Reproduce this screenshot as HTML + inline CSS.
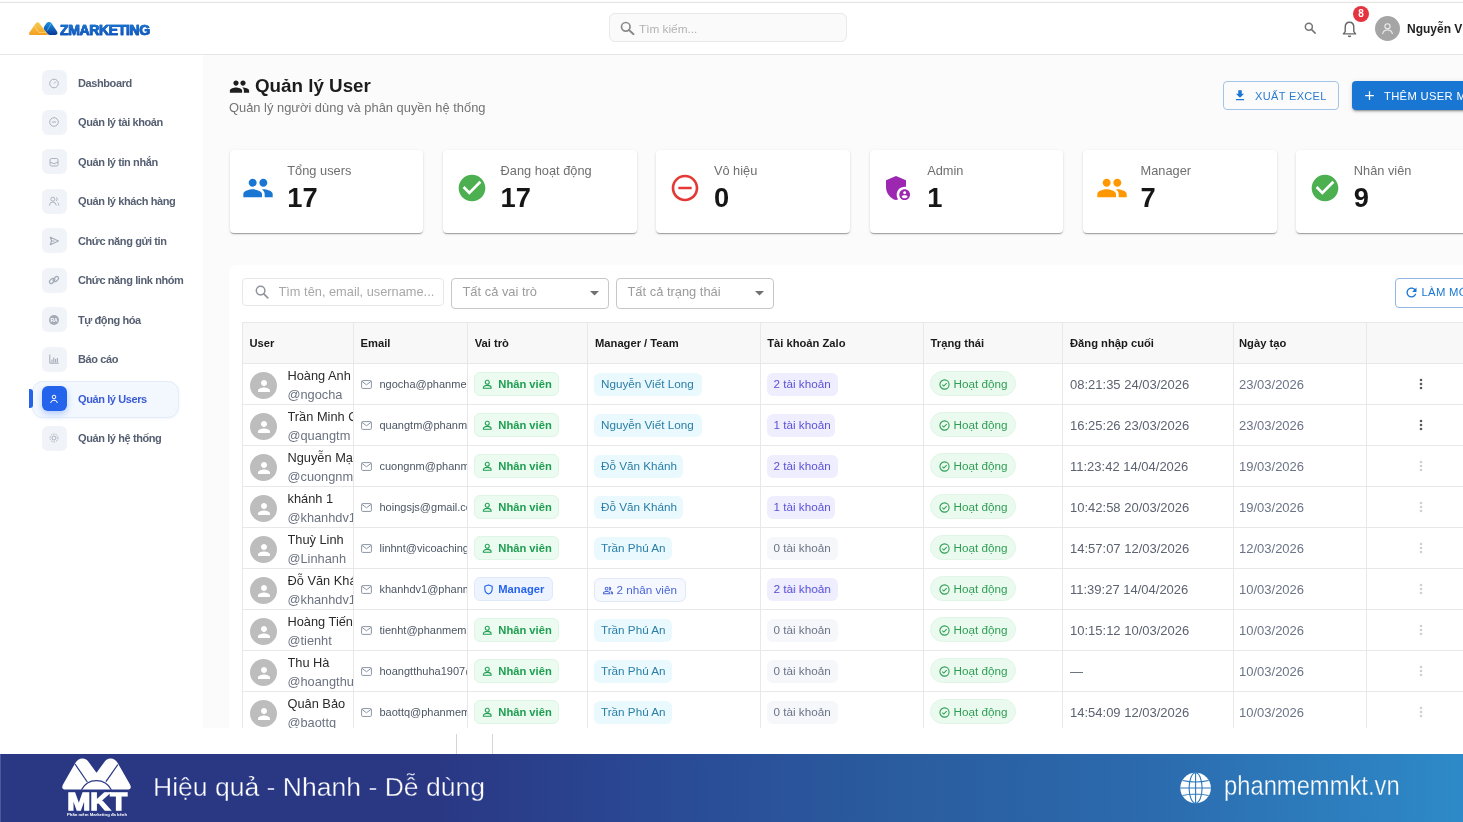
<!DOCTYPE html>
<html><head><meta charset="utf-8">
<style>

*{box-sizing:border-box;margin:0;padding:0}
html,body{width:1463px;height:822px;overflow:hidden;background:#fff;font-family:"Liberation Sans",sans-serif;color:#222}
.abs{position:absolute}
#topline{position:absolute;left:0;top:2px;width:1463px;height:1px;background:#e3e3e3;box-shadow:0 0 2px rgba(0,0,0,.08)}
#header{position:absolute;left:0;top:3px;width:1463px;height:52px;background:#fff;border-bottom:1px solid #e6e6e6;box-shadow:0 1px 2px rgba(0,0,0,.05)}
#sidebar{position:absolute;left:0;top:55px;width:203px;height:673px;background:#fff}
#main{position:absolute;left:203px;top:55px;width:1260px;height:673px;background:#fbfbfb}
#footer{position:absolute;left:0;top:754px;width:1463px;height:68px;background:linear-gradient(90deg,#5b6bab 0px,#2a3883 1.5px,#2a3884 30%,#2a4d98 48%,#2a5d9f 62%,#2b6aad 78%,#2e8ac8 100%)}
.nav{position:absolute;left:41.5px;width:170px;height:25px}
.nav .ic{position:absolute;left:0;top:0;width:25px;height:25px;border-radius:6px;background:#f0f3f8}
.nav .tx{position:absolute;left:36.5px;top:6.5px;font-size:11px;line-height:13px;letter-spacing:-0.4px;font-weight:700;color:#566072;white-space:nowrap}
.card{background:#fff;border-radius:4px;box-shadow:0 2px 1px -1px rgba(0,0,0,.2),0 1px 1px 0 rgba(0,0,0,.14),0 1px 3px 0 rgba(0,0,0,.12)}
#main{overflow:hidden}
.th{font-size:11.2px;line-height:14px;font-weight:700;color:#1a1a1a;white-space:nowrap}
.badge{border-radius:6px;white-space:nowrap}
.badge div{white-space:nowrap}
.hl{width:1300px;height:1px;background:#e8e8e8}.vl{width:1px;height:460px;background:#e8e8e8}
</style></head>
<body>
<div id="wrap" style="position:absolute;left:0;top:0;width:1463px;height:822px;overflow:hidden;filter:blur(0.35px)">
<div id="topline"></div>
<div id="header">
 <svg class="abs" style="left:26px;top:15px" width="36" height="20" viewBox="0 0 36 20">
  <defs><linearGradient id="lgo" x1="0" y1="0" x2="0" y2="1"><stop offset="0" stop-color="#f3cd55"/><stop offset="1" stop-color="#f59e1f"/></linearGradient>
  <linearGradient id="lgb" x1="0" y1="0" x2="0" y2="1"><stop offset="0" stop-color="#1b95dc"/><stop offset="1" stop-color="#08379a"/></linearGradient></defs>
  <path d="M9.6 5.4 Q11.6 2.9 13.6 5.4 L22.2 16.9 L4.6 16.9 Q2.2 16.9 3.4 14.4 Z" fill="url(#lgo)"/>
  <path d="M8.2 7.6 L12.8 14.4 L20.4 14.4" fill="none" stroke="#fcd77a" stroke-width="0.8"/>
  <path d="M18.2 11.6 Q17.2 10.2 18.2 8.6 L20.4 5.3 Q21.4 3.9 23 3.9 Q24.5 3.9 25.5 5.3 L31 13.6 Q32.4 16.9 29.4 16.9 L23.8 16.9 Q22.6 16.9 21.8 15.9 Z" fill="url(#lgb)"/>
  <path d="M25.2 5.2 L21.2 12.6" fill="none" stroke="#5cb8f2" stroke-width="0.8"/>
 </svg>
 <div class="abs" style="left:60px;top:18.5px;font-size:14px;line-height:17px;font-weight:700;letter-spacing:-0.35px;color:#1259c3;background:linear-gradient(180deg,#1f8ad8 0%,#1565c8 50%,#0b3f9f 100%);-webkit-background-clip:text;background-clip:text;-webkit-text-fill-color:transparent;-webkit-text-stroke:0.7px #145ec0">ZMARKETING</div>
 <div class="abs" style="left:609px;top:10px;width:238px;height:29px;background:#fafafa;border:1px solid #e9e9e9;border-radius:6px"></div>
 <svg class="abs" style="left:620px;top:18px" width="15" height="14" viewBox="0 0 15 14"><circle cx="5.8" cy="5.8" r="4.3" fill="none" stroke="#8a8a8a" stroke-width="1.7"/><path d="M9 9 L13.5 13.3" stroke="#8a8a8a" stroke-width="1.9" stroke-linecap="round"/></svg>
 <div class="abs" style="left:639px;top:19px;font-size:11.8px;color:#b3b3b3">Tìm kiếm...</div>
 <svg class="abs" style="left:1303.5px;top:19px" width="13" height="12" viewBox="0 0 14 13"><circle cx="5.2" cy="5.2" r="3.8" fill="none" stroke="#757575" stroke-width="1.6"/><path d="M8 8 L12 12" stroke="#757575" stroke-width="1.7" stroke-linecap="round"/></svg>
 <svg class="abs" style="left:1342px;top:18px" width="15" height="17" viewBox="0 0 15 17"><path d="M7.5 1.2 C4.6 1.2 3.2 3.6 3.2 6.4 L3.2 10.6 L1.4 12.9 L13.6 12.9 L11.8 10.6 L11.8 6.4 C11.8 3.6 10.4 1.2 7.5 1.2 Z" fill="none" stroke="#666" stroke-width="1.4" stroke-linejoin="round"/><path d="M6.2 14.8 Q7.5 16.2 8.8 14.8" fill="none" stroke="#666" stroke-width="1.3"/></svg>
 <div class="abs" style="left:1353px;top:3px;width:16px;height:16px;border-radius:50%;background:#e5343f;color:#fff;font-size:10px;font-weight:700;text-align:center;line-height:16px">8</div>
 <div class="abs" style="left:1375px;top:13px;width:25px;height:25px;border-radius:50%;background:#a5a5a5"></div>
 <svg class="abs" style="left:1381px;top:19px" width="13" height="13" viewBox="0 0 13 13"><circle cx="6.5" cy="4.3" r="2.6" fill="none" stroke="#eee" stroke-width="1.1"/><path d="M1.6 12 Q2.2 8 6.5 8 Q10.8 8 11.4 12" fill="none" stroke="#eee" stroke-width="1.1"/></svg>
 <div class="abs" style="left:1407px;top:19px;font-size:12px;font-weight:700;color:#222;white-space:nowrap">Nguyễn Viết Long</div>
</div>
<div id="sidebar">
<div class="abs" style="left:32px;top:325.5px;width:147px;height:37px;border-radius:11px;background:#f3f8ff;border:1px solid #e3ecf9;box-shadow:0 1px 3px rgba(37,99,235,.06)"></div>
<div class="abs" style="left:29px;top:334px;width:4px;height:19px;border-radius:0 3px 3px 0;background:#2563eb"></div>
<div class="nav" style="top:15.0px"><div class="ic"></div><svg class="abs" style="left:6.5px;top:6.5px" width="12" height="12" viewBox="0 0 12 12"><circle cx="6" cy="6.5" r="4.3" fill="none" stroke="#a3abb7" stroke-width="0.9"/><path d="M6 6.5 L7.8 4.6" stroke="#a3abb7" stroke-width="0.9"/></svg><div class="tx">Dashboard</div></div>
<div class="nav" style="top:54.5px"><div class="ic"></div><svg class="abs" style="left:6.5px;top:6.5px" width="12" height="12" viewBox="0 0 12 12"><circle cx="6" cy="6" r="4.3" fill="none" stroke="#a3abb7" stroke-width="0.9"/><path d="M4 6 h4" stroke="#a3abb7" stroke-width="0.9"/></svg><div class="tx">Quản lý tài khoản</div></div>
<div class="nav" style="top:94.0px"><div class="ic"></div><svg class="abs" style="left:6.5px;top:6.5px" width="12" height="12" viewBox="0 0 12 12"><rect x="2" y="2.5" width="8" height="7.5" rx="1.5" fill="none" stroke="#a3abb7" stroke-width="0.9"/><path d="M2 6 L6 7.8 L10 6" fill="none" stroke="#a3abb7" stroke-width="0.9"/></svg><div class="tx">Quản lý tin nhắn</div></div>
<div class="nav" style="top:133.5px"><div class="ic"></div><svg class="abs" style="left:6.5px;top:6.5px" width="12" height="12" viewBox="0 0 12 12"><circle cx="4.8" cy="4.2" r="2" fill="none" stroke="#a3abb7" stroke-width="0.9"/><path d="M1.3 10.5 Q1.8 7 4.8 7 Q7.8 7 8.3 10.5" fill="none" stroke="#a3abb7" stroke-width="0.9"/><path d="M8.5 2.5 Q10 4 8.5 6 M9.5 7.5 Q10.8 8.5 10.8 10.5" fill="none" stroke="#a3abb7" stroke-width="0.9"/></svg><div class="tx">Quản lý khách hàng</div></div>
<div class="nav" style="top:173.0px"><div class="ic"></div><svg class="abs" style="left:6.5px;top:6.5px" width="12" height="12" viewBox="0 0 12 12"><path d="M2.3 2.3 L10.5 6 L2.3 9.7 L3.6 6 Z M3.6 6 H6.5" fill="none" stroke="#a3abb7" stroke-width="1.1" stroke-linejoin="round"/></svg><div class="tx">Chức năng gửi tin</div></div>
<div class="nav" style="top:212.5px"><div class="ic"></div><svg class="abs" style="left:6.5px;top:6.5px" width="12" height="12" viewBox="0 0 12 12"><path d="M4.6 7.4 L7.4 4.6" stroke="#a3abb7" stroke-width="1.2" fill="none"/><rect x="1.2" y="5.2" width="5.6" height="3.6" rx="1.8" transform="rotate(-45 4 7)" fill="none" stroke="#a3abb7" stroke-width="1.2"/><rect x="5.2" y="3.2" width="5.6" height="3.6" rx="1.8" transform="rotate(-45 8 5)" fill="none" stroke="#a3abb7" stroke-width="1.2"/></svg><div class="tx">Chức năng link nhóm</div></div>
<div class="nav" style="top:252.0px"><div class="ic"></div><svg class="abs" style="left:6.5px;top:6.5px" width="12" height="12" viewBox="0 0 12 12"><circle cx="6" cy="6" r="5" fill="#a3abb7"/><text x="6" y="7.9" text-anchor="middle" font-family="Liberation Sans" font-weight="700" font-size="5" fill="#fff">RA</text></svg><div class="tx">Tự động hóa</div></div>
<div class="nav" style="top:291.5px"><div class="ic"></div><svg class="abs" style="left:6.5px;top:6.5px" width="12" height="12" viewBox="0 0 12 12"><path d="M1.8 1.5 V10.2 H10.8" fill="none" stroke="#a3abb7" stroke-width="1"/><path d="M4 9.5 V6.5 M5.8 9.5 V4.5 M7.6 9.5 V6 M9.4 9.5 V5" fill="none" stroke="#a3abb7" stroke-width="1.1"/></svg><div class="tx">Báo cáo</div></div>
<div class="nav" style="top:331.0px"><div class="ic" style="background:#2463eb;box-shadow:0 3px 6px rgba(37,99,235,.3)"></div><svg class="abs" style="left:6.5px;top:6.5px" width="12" height="12" viewBox="0 0 12 12"><circle cx="6" cy="4" r="1.8" fill="none" stroke="#fff" stroke-width="1"/><path d="M2.6 10 Q3 7.2 6 7.2 Q9 7.2 9.4 10" fill="none" stroke="#fff" stroke-width="1"/></svg><div class="tx" style="color:#3b5bd6">Quản lý Users</div></div>
<div class="nav" style="top:370.5px"><div class="ic"></div><svg class="abs" style="left:6.5px;top:6.5px" width="12" height="12" viewBox="0 0 12 12"><circle cx="6" cy="6" r="2" fill="none" stroke="#a3abb7" stroke-width="0.9"/><circle cx="6" cy="6" r="4" fill="none" stroke="#a3abb7" stroke-width="0.9" stroke-dasharray="1.5 1"/></svg><div class="tx">Quản lý hệ thống</div></div>
</div>
<div id="main">
<div id="tablecard" class="abs" style="left:26px;top:210px;width:1300px;height:600px;background:#fff;border-radius:8px"></div>
<div class="abs" style="left:39px;top:222.5px;width:201.5px;height:28px;border:1px solid #e5e7eb;border-radius:4px;background:#fff"></div>
<svg class="abs" style="left:52px;top:229.5px" width="14" height="14" viewBox="0 0 14 14"><circle cx="5.6" cy="5.6" r="4.3" fill="none" stroke="#8f949c" stroke-width="1.5"/><path d="M8.8 8.8 L12.8 12.8" stroke="#8f949c" stroke-width="1.7" stroke-linecap="round"/></svg>
<div class="abs" style="left:75.5px;top:229px;width:159px;overflow:hidden;font-size:12.8px;line-height:15px;color:#a8a8a8;white-space:nowrap">Tìm tên, email, username...</div>
<div class="abs" style="left:248px;top:222.8px;width:157.5px;height:31px;border:1px solid #c7c7c7;border-radius:4px;background:#fff"><div class="abs" style="left:10.5px;top:5.5px;font-size:12.9px;line-height:15px;color:#9b9b9b;white-space:nowrap">Tất cả vai trò</div><svg class="abs" style="left:137.5px;top:12px" width="9" height="5" viewBox="0 0 9 5"><path d="M0 0 L9 0 L4.5 4.6 Z" fill="#707070"/></svg></div>
<div class="abs" style="left:413px;top:222.8px;width:158px;height:31px;border:1px solid #c7c7c7;border-radius:4px;background:#fff"><div class="abs" style="left:10.5px;top:5.5px;font-size:12.9px;line-height:15px;color:#9b9b9b;white-space:nowrap">Tất cả trạng thái</div><svg class="abs" style="left:138px;top:12px" width="9" height="5" viewBox="0 0 9 5"><path d="M0 0 L9 0 L4.5 4.6 Z" fill="#707070"/></svg></div>
<div class="abs" style="left:1191.5px;top:222.5px;width:110px;height:30px;border:1px solid #93b7e3;border-radius:4px;background:#fff"></div>
<svg class="abs" style="left:1201px;top:230px" width="15" height="15" viewBox="0 0 24 24"><path d="M17.65 6.35C16.2 4.9 14.21 4 12 4c-4.42 0-7.99 3.58-7.99 8s3.57 8 7.99 8c3.730 0 6.84-2.55 7.73-6h-2.08c-.82 2.33-3.04 4-5.65 4-3.31 0-6-2.69-6-6s2.69-6 6-6c1.66 0 3.14.69 4.22 1.78L13 11h7V4z" fill="#1976d2"/></svg>
<div class="abs" style="left:1218.5px;top:231px;font-size:11.3px;line-height:13px;color:#1976d2;letter-spacing:0.3px;white-space:nowrap">LÀM MỚI</div>
<div class="abs" style="left:39px;top:267px;width:1300px;height:41px;background:#f8f8f8"></div>
<div class="abs hl" style="left:39px;top:267px"></div>
<div class="abs hl" style="left:39px;top:308px"></div>
<div class="abs hl" style="left:39px;top:349px"></div>
<div class="abs hl" style="left:39px;top:390px"></div>
<div class="abs hl" style="left:39px;top:431px"></div>
<div class="abs hl" style="left:39px;top:472px"></div>
<div class="abs hl" style="left:39px;top:513px"></div>
<div class="abs hl" style="left:39px;top:554px"></div>
<div class="abs hl" style="left:39px;top:595px"></div>
<div class="abs hl" style="left:39px;top:636px"></div>
<div class="abs hl" style="left:39px;top:677px"></div>
<div class="abs vl" style="left:39px;top:267px"></div>
<div class="abs vl" style="left:150px;top:267px"></div>
<div class="abs vl" style="left:264px;top:267px"></div>
<div class="abs vl" style="left:384px;top:267px"></div>
<div class="abs vl" style="left:557px;top:267px"></div>
<div class="abs vl" style="left:720px;top:267px"></div>
<div class="abs vl" style="left:859px;top:267px"></div>
<div class="abs vl" style="left:1030px;top:267px"></div>
<div class="abs vl" style="left:1163px;top:267px"></div>
<div class="abs th" style="left:46.5px;top:281px">User</div>
<div class="abs th" style="left:157.5px;top:281px">Email</div>
<div class="abs th" style="left:271.7px;top:281px">Vai trò</div>
<div class="abs th" style="left:392px;top:281px">Manager / Team</div>
<div class="abs th" style="left:564.2px;top:281px">Tài khoản Zalo</div>
<div class="abs th" style="left:727.6px;top:281px">Trạng thái</div>
<div class="abs th" style="left:867px;top:281px">Đăng nhập cuối</div>
<div class="abs th" style="left:1036px;top:281px">Ngày tạo</div>
<div class="abs" style="left:47px;top:317px;width:27px;height:27px;border-radius:50%;background:#bdbdbd"></div>
<svg class="abs" style="left:51.5px;top:321.5px" width="18" height="18" viewBox="0 0 24 24"><path d="M12 12c2.21 0 4-1.79 4-4s-1.79-4-4-4-4 1.79-4 4 1.79 4 4 4m0 2c-2.67 0-8 1.34-8 4v2h16v-2c0-2.66-5.33-4-8-4" fill="#fff"/></svg>
<div class="abs" style="left:84.5px;top:312.8px;width:65.5px;overflow:hidden;font-size:12.8px;line-height:15px;color:#2b2b2b;white-space:nowrap">Hoàng Anh</div>
<div class="abs" style="left:84.5px;top:331.8px;width:65.5px;overflow:hidden;font-size:12.8px;line-height:15px;color:#6b7280;white-space:nowrap">@ngocha</div>
<svg class="abs" style="left:158px;top:325px" width="11" height="9" viewBox="0 0 11 9"><rect x="0.6" y="0.6" width="9.8" height="7.8" rx="1" fill="none" stroke="#8b95a5" stroke-width="1"/><path d="M0.8 1.2 L5.5 4.8 L10.2 1.2" fill="none" stroke="#8b95a5" stroke-width="1"/></svg>
<div class="abs" style="left:176.5px;top:321.5px;width:87.5px;overflow:hidden;font-size:11px;line-height:14px;color:#4b5563;white-space:nowrap">ngocha@phanmem.vn</div>
<div class="abs badge" style="left:271.3px;top:316.5px;width:85px;height:24.5px;background:#ebfbf0;border:1px solid #dff5e6;color:#1e9e50"><svg class="abs" style="left:7px;top:6px;color:#1e9e50" width="10.5" height="10.5" viewBox="0 0 12 12"><circle cx="6" cy="3.8" r="2.3" fill="none" stroke="currentColor" stroke-width="1.2"/><path d="M1.5 10.5 Q1.5 7.3 6 7.3 Q10.5 7.3 10.5 10.5 Z" fill="none" stroke="currentColor" stroke-width="1.2" stroke-linejoin="round"/></svg><div class="abs" style="left:23px;top:5.5px;font-size:11.2px;line-height:13px;font-weight:700">Nhân viên</div></div>
<div class="abs badge" style="left:391px;top:317.5px;width:107.5px;height:23px;background:#e9f9fd;color:#2b7ea6"><div class="abs" style="left:7px;top:4.5px;font-size:11.7px;line-height:14px">Nguyễn Viết Long</div></div>
<div class="abs badge" style="left:564px;top:317.5px;width:70.5px;height:23px;background:#efeefe;color:#5b52d6"><div class="abs" style="left:6.5px;top:4.5px;font-size:11.7px;line-height:14px">2 tài khoản</div></div>
<div class="abs" style="left:727px;top:316px;width:85.5px;height:25px;border-radius:13px;background:#ebfaef;border:1px solid #e0f5e6;color:#2f9e55"><svg class="abs" style="left:7.5px;top:6.5px" width="11" height="11" viewBox="0 0 12 12"><circle cx="6" cy="6" r="5" fill="none" stroke="#2f9e55" stroke-width="1.2"/><path d="M3.6 6.1 L5.3 7.7 L8.4 4.6" fill="none" stroke="#2f9e55" stroke-width="1.2"/></svg><div class="abs" style="left:22.5px;top:5px;font-size:11.7px;line-height:14px">Hoạt động</div></div>
<div class="abs" style="left:867px;top:321.5px;font-size:13px;line-height:15px;color:#5c6370;white-space:nowrap">08:21:35 24/03/2026</div>
<div class="abs" style="left:1036px;top:322px;font-size:13px;line-height:15px;color:#6b7487;white-space:nowrap">23/03/2026</div>
<svg class="abs" style="left:1216.1px;top:323px" width="4" height="13" viewBox="0 0 4 13"><circle cx="2" cy="2" r="1.3" fill="#5a5a5a"/><circle cx="2" cy="6" r="1.3" fill="#5a5a5a"/><circle cx="2" cy="10" r="1.3" fill="#5a5a5a"/></svg>
<div class="abs" style="left:47px;top:358px;width:27px;height:27px;border-radius:50%;background:#bdbdbd"></div>
<svg class="abs" style="left:51.5px;top:362.5px" width="18" height="18" viewBox="0 0 24 24"><path d="M12 12c2.21 0 4-1.79 4-4s-1.79-4-4-4-4 1.79-4 4 1.79 4 4 4m0 2c-2.67 0-8 1.34-8 4v2h16v-2c0-2.66-5.33-4-8-4" fill="#fff"/></svg>
<div class="abs" style="left:84.5px;top:353.8px;width:65.5px;overflow:hidden;font-size:12.8px;line-height:15px;color:#2b2b2b;white-space:nowrap">Trần Minh Quang</div>
<div class="abs" style="left:84.5px;top:372.8px;width:65.5px;overflow:hidden;font-size:12.8px;line-height:15px;color:#6b7280;white-space:nowrap">@quangtm</div>
<svg class="abs" style="left:158px;top:366px" width="11" height="9" viewBox="0 0 11 9"><rect x="0.6" y="0.6" width="9.8" height="7.8" rx="1" fill="none" stroke="#8b95a5" stroke-width="1"/><path d="M0.8 1.2 L5.5 4.8 L10.2 1.2" fill="none" stroke="#8b95a5" stroke-width="1"/></svg>
<div class="abs" style="left:176.5px;top:362.5px;width:87.5px;overflow:hidden;font-size:11px;line-height:14px;color:#4b5563;white-space:nowrap">quangtm@phanmem.vn</div>
<div class="abs badge" style="left:271.3px;top:357.5px;width:85px;height:24.5px;background:#ebfbf0;border:1px solid #dff5e6;color:#1e9e50"><svg class="abs" style="left:7px;top:6px;color:#1e9e50" width="10.5" height="10.5" viewBox="0 0 12 12"><circle cx="6" cy="3.8" r="2.3" fill="none" stroke="currentColor" stroke-width="1.2"/><path d="M1.5 10.5 Q1.5 7.3 6 7.3 Q10.5 7.3 10.5 10.5 Z" fill="none" stroke="currentColor" stroke-width="1.2" stroke-linejoin="round"/></svg><div class="abs" style="left:23px;top:5.5px;font-size:11.2px;line-height:13px;font-weight:700">Nhân viên</div></div>
<div class="abs badge" style="left:391px;top:358.5px;width:107.5px;height:23px;background:#e9f9fd;color:#2b7ea6"><div class="abs" style="left:7px;top:4.5px;font-size:11.7px;line-height:14px">Nguyễn Viết Long</div></div>
<div class="abs badge" style="left:564px;top:358.5px;width:68px;height:23px;background:#efeefe;color:#5b52d6"><div class="abs" style="left:6.5px;top:4.5px;font-size:11.7px;line-height:14px">1 tài khoản</div></div>
<div class="abs" style="left:727px;top:357px;width:85.5px;height:25px;border-radius:13px;background:#ebfaef;border:1px solid #e0f5e6;color:#2f9e55"><svg class="abs" style="left:7.5px;top:6.5px" width="11" height="11" viewBox="0 0 12 12"><circle cx="6" cy="6" r="5" fill="none" stroke="#2f9e55" stroke-width="1.2"/><path d="M3.6 6.1 L5.3 7.7 L8.4 4.6" fill="none" stroke="#2f9e55" stroke-width="1.2"/></svg><div class="abs" style="left:22.5px;top:5px;font-size:11.7px;line-height:14px">Hoạt động</div></div>
<div class="abs" style="left:867px;top:362.5px;font-size:13px;line-height:15px;color:#5c6370;white-space:nowrap">16:25:26 23/03/2026</div>
<div class="abs" style="left:1036px;top:363px;font-size:13px;line-height:15px;color:#6b7487;white-space:nowrap">23/03/2026</div>
<svg class="abs" style="left:1216.1px;top:364px" width="4" height="13" viewBox="0 0 4 13"><circle cx="2" cy="2" r="1.3" fill="#5a5a5a"/><circle cx="2" cy="6" r="1.3" fill="#5a5a5a"/><circle cx="2" cy="10" r="1.3" fill="#5a5a5a"/></svg>
<div class="abs" style="left:47px;top:399px;width:27px;height:27px;border-radius:50%;background:#bdbdbd"></div>
<svg class="abs" style="left:51.5px;top:403.5px" width="18" height="18" viewBox="0 0 24 24"><path d="M12 12c2.21 0 4-1.79 4-4s-1.79-4-4-4-4 1.79-4 4 1.79 4 4 4m0 2c-2.67 0-8 1.34-8 4v2h16v-2c0-2.66-5.33-4-8-4" fill="#fff"/></svg>
<div class="abs" style="left:84.5px;top:394.8px;width:65.5px;overflow:hidden;font-size:12.8px;line-height:15px;color:#2b2b2b;white-space:nowrap">Nguyễn Mạnh Cường</div>
<div class="abs" style="left:84.5px;top:413.8px;width:65.5px;overflow:hidden;font-size:12.8px;line-height:15px;color:#6b7280;white-space:nowrap">@cuongnm</div>
<svg class="abs" style="left:158px;top:407px" width="11" height="9" viewBox="0 0 11 9"><rect x="0.6" y="0.6" width="9.8" height="7.8" rx="1" fill="none" stroke="#8b95a5" stroke-width="1"/><path d="M0.8 1.2 L5.5 4.8 L10.2 1.2" fill="none" stroke="#8b95a5" stroke-width="1"/></svg>
<div class="abs" style="left:176.5px;top:403.5px;width:87.5px;overflow:hidden;font-size:11px;line-height:14px;color:#4b5563;white-space:nowrap">cuongnm@phanmem.vn</div>
<div class="abs badge" style="left:271.3px;top:398.5px;width:85px;height:24.5px;background:#ebfbf0;border:1px solid #dff5e6;color:#1e9e50"><svg class="abs" style="left:7px;top:6px;color:#1e9e50" width="10.5" height="10.5" viewBox="0 0 12 12"><circle cx="6" cy="3.8" r="2.3" fill="none" stroke="currentColor" stroke-width="1.2"/><path d="M1.5 10.5 Q1.5 7.3 6 7.3 Q10.5 7.3 10.5 10.5 Z" fill="none" stroke="currentColor" stroke-width="1.2" stroke-linejoin="round"/></svg><div class="abs" style="left:23px;top:5.5px;font-size:11.2px;line-height:13px;font-weight:700">Nhân viên</div></div>
<div class="abs badge" style="left:391px;top:399.5px;width:89px;height:23px;background:#e9f9fd;color:#2b7ea6"><div class="abs" style="left:7px;top:4.5px;font-size:11.7px;line-height:14px">Đỗ Văn Khánh</div></div>
<div class="abs badge" style="left:564px;top:399.5px;width:70.5px;height:23px;background:#efeefe;color:#5b52d6"><div class="abs" style="left:6.5px;top:4.5px;font-size:11.7px;line-height:14px">2 tài khoản</div></div>
<div class="abs" style="left:727px;top:398px;width:85.5px;height:25px;border-radius:13px;background:#ebfaef;border:1px solid #e0f5e6;color:#2f9e55"><svg class="abs" style="left:7.5px;top:6.5px" width="11" height="11" viewBox="0 0 12 12"><circle cx="6" cy="6" r="5" fill="none" stroke="#2f9e55" stroke-width="1.2"/><path d="M3.6 6.1 L5.3 7.7 L8.4 4.6" fill="none" stroke="#2f9e55" stroke-width="1.2"/></svg><div class="abs" style="left:22.5px;top:5px;font-size:11.7px;line-height:14px">Hoạt động</div></div>
<div class="abs" style="left:867px;top:403.5px;font-size:13px;line-height:15px;color:#5c6370;white-space:nowrap">11:23:42 14/04/2026</div>
<div class="abs" style="left:1036px;top:404px;font-size:13px;line-height:15px;color:#6b7487;white-space:nowrap">19/03/2026</div>
<svg class="abs" style="left:1216.1px;top:405px" width="4" height="13" viewBox="0 0 4 13"><circle cx="2" cy="2" r="1.3" fill="#d0d0d0"/><circle cx="2" cy="6" r="1.3" fill="#d0d0d0"/><circle cx="2" cy="10" r="1.3" fill="#d0d0d0"/></svg>
<div class="abs" style="left:47px;top:440px;width:27px;height:27px;border-radius:50%;background:#bdbdbd"></div>
<svg class="abs" style="left:51.5px;top:444.5px" width="18" height="18" viewBox="0 0 24 24"><path d="M12 12c2.21 0 4-1.79 4-4s-1.79-4-4-4-4 1.79-4 4 1.79 4 4 4m0 2c-2.67 0-8 1.34-8 4v2h16v-2c0-2.66-5.33-4-8-4" fill="#fff"/></svg>
<div class="abs" style="left:84.5px;top:435.8px;width:65.5px;overflow:hidden;font-size:12.8px;line-height:15px;color:#2b2b2b;white-space:nowrap">khánh 1</div>
<div class="abs" style="left:84.5px;top:454.8px;width:65.5px;overflow:hidden;font-size:12.8px;line-height:15px;color:#6b7280;white-space:nowrap">@khanhdv1</div>
<svg class="abs" style="left:158px;top:448px" width="11" height="9" viewBox="0 0 11 9"><rect x="0.6" y="0.6" width="9.8" height="7.8" rx="1" fill="none" stroke="#8b95a5" stroke-width="1"/><path d="M0.8 1.2 L5.5 4.8 L10.2 1.2" fill="none" stroke="#8b95a5" stroke-width="1"/></svg>
<div class="abs" style="left:176.5px;top:444.5px;width:87.5px;overflow:hidden;font-size:11px;line-height:14px;color:#4b5563;white-space:nowrap">hoingsjs@gmail.com</div>
<div class="abs badge" style="left:271.3px;top:439.5px;width:85px;height:24.5px;background:#ebfbf0;border:1px solid #dff5e6;color:#1e9e50"><svg class="abs" style="left:7px;top:6px;color:#1e9e50" width="10.5" height="10.5" viewBox="0 0 12 12"><circle cx="6" cy="3.8" r="2.3" fill="none" stroke="currentColor" stroke-width="1.2"/><path d="M1.5 10.5 Q1.5 7.3 6 7.3 Q10.5 7.3 10.5 10.5 Z" fill="none" stroke="currentColor" stroke-width="1.2" stroke-linejoin="round"/></svg><div class="abs" style="left:23px;top:5.5px;font-size:11.2px;line-height:13px;font-weight:700">Nhân viên</div></div>
<div class="abs badge" style="left:391px;top:440.5px;width:89px;height:23px;background:#e9f9fd;color:#2b7ea6"><div class="abs" style="left:7px;top:4.5px;font-size:11.7px;line-height:14px">Đỗ Văn Khánh</div></div>
<div class="abs badge" style="left:564px;top:440.5px;width:68px;height:23px;background:#efeefe;color:#5b52d6"><div class="abs" style="left:6.5px;top:4.5px;font-size:11.7px;line-height:14px">1 tài khoản</div></div>
<div class="abs" style="left:727px;top:439px;width:85.5px;height:25px;border-radius:13px;background:#ebfaef;border:1px solid #e0f5e6;color:#2f9e55"><svg class="abs" style="left:7.5px;top:6.5px" width="11" height="11" viewBox="0 0 12 12"><circle cx="6" cy="6" r="5" fill="none" stroke="#2f9e55" stroke-width="1.2"/><path d="M3.6 6.1 L5.3 7.7 L8.4 4.6" fill="none" stroke="#2f9e55" stroke-width="1.2"/></svg><div class="abs" style="left:22.5px;top:5px;font-size:11.7px;line-height:14px">Hoạt động</div></div>
<div class="abs" style="left:867px;top:444.5px;font-size:13px;line-height:15px;color:#5c6370;white-space:nowrap">10:42:58 20/03/2026</div>
<div class="abs" style="left:1036px;top:445px;font-size:13px;line-height:15px;color:#6b7487;white-space:nowrap">19/03/2026</div>
<svg class="abs" style="left:1216.1px;top:446px" width="4" height="13" viewBox="0 0 4 13"><circle cx="2" cy="2" r="1.3" fill="#d0d0d0"/><circle cx="2" cy="6" r="1.3" fill="#d0d0d0"/><circle cx="2" cy="10" r="1.3" fill="#d0d0d0"/></svg>
<div class="abs" style="left:47px;top:481px;width:27px;height:27px;border-radius:50%;background:#bdbdbd"></div>
<svg class="abs" style="left:51.5px;top:485.5px" width="18" height="18" viewBox="0 0 24 24"><path d="M12 12c2.21 0 4-1.79 4-4s-1.79-4-4-4-4 1.79-4 4 1.79 4 4 4m0 2c-2.67 0-8 1.34-8 4v2h16v-2c0-2.66-5.33-4-8-4" fill="#fff"/></svg>
<div class="abs" style="left:84.5px;top:476.8px;width:65.5px;overflow:hidden;font-size:12.8px;line-height:15px;color:#2b2b2b;white-space:nowrap">Thuỳ Linh</div>
<div class="abs" style="left:84.5px;top:495.8px;width:65.5px;overflow:hidden;font-size:12.8px;line-height:15px;color:#6b7280;white-space:nowrap">@Linhanh</div>
<svg class="abs" style="left:158px;top:489px" width="11" height="9" viewBox="0 0 11 9"><rect x="0.6" y="0.6" width="9.8" height="7.8" rx="1" fill="none" stroke="#8b95a5" stroke-width="1"/><path d="M0.8 1.2 L5.5 4.8 L10.2 1.2" fill="none" stroke="#8b95a5" stroke-width="1"/></svg>
<div class="abs" style="left:176.5px;top:485.5px;width:87.5px;overflow:hidden;font-size:11px;line-height:14px;color:#4b5563;white-space:nowrap">linhnt@vicoaching.vn</div>
<div class="abs badge" style="left:271.3px;top:480.5px;width:85px;height:24.5px;background:#ebfbf0;border:1px solid #dff5e6;color:#1e9e50"><svg class="abs" style="left:7px;top:6px;color:#1e9e50" width="10.5" height="10.5" viewBox="0 0 12 12"><circle cx="6" cy="3.8" r="2.3" fill="none" stroke="currentColor" stroke-width="1.2"/><path d="M1.5 10.5 Q1.5 7.3 6 7.3 Q10.5 7.3 10.5 10.5 Z" fill="none" stroke="currentColor" stroke-width="1.2" stroke-linejoin="round"/></svg><div class="abs" style="left:23px;top:5.5px;font-size:11.2px;line-height:13px;font-weight:700">Nhân viên</div></div>
<div class="abs badge" style="left:391px;top:481.5px;width:77.5px;height:23px;background:#e9f9fd;color:#2b7ea6"><div class="abs" style="left:7px;top:4.5px;font-size:11.7px;line-height:14px">Trần Phú An</div></div>
<div class="abs badge" style="left:564px;top:481.5px;width:70.5px;height:23px;background:#f5f7fa;color:#6b7587"><div class="abs" style="left:6.5px;top:4.5px;font-size:11.7px;line-height:14px">0 tài khoản</div></div>
<div class="abs" style="left:727px;top:480px;width:85.5px;height:25px;border-radius:13px;background:#ebfaef;border:1px solid #e0f5e6;color:#2f9e55"><svg class="abs" style="left:7.5px;top:6.5px" width="11" height="11" viewBox="0 0 12 12"><circle cx="6" cy="6" r="5" fill="none" stroke="#2f9e55" stroke-width="1.2"/><path d="M3.6 6.1 L5.3 7.7 L8.4 4.6" fill="none" stroke="#2f9e55" stroke-width="1.2"/></svg><div class="abs" style="left:22.5px;top:5px;font-size:11.7px;line-height:14px">Hoạt động</div></div>
<div class="abs" style="left:867px;top:485.5px;font-size:13px;line-height:15px;color:#5c6370;white-space:nowrap">14:57:07 12/03/2026</div>
<div class="abs" style="left:1036px;top:486px;font-size:13px;line-height:15px;color:#6b7487;white-space:nowrap">12/03/2026</div>
<svg class="abs" style="left:1216.1px;top:487px" width="4" height="13" viewBox="0 0 4 13"><circle cx="2" cy="2" r="1.3" fill="#d0d0d0"/><circle cx="2" cy="6" r="1.3" fill="#d0d0d0"/><circle cx="2" cy="10" r="1.3" fill="#d0d0d0"/></svg>
<div class="abs" style="left:47px;top:522px;width:27px;height:27px;border-radius:50%;background:#bdbdbd"></div>
<svg class="abs" style="left:51.5px;top:526.5px" width="18" height="18" viewBox="0 0 24 24"><path d="M12 12c2.21 0 4-1.79 4-4s-1.79-4-4-4-4 1.79-4 4 1.79 4 4 4m0 2c-2.67 0-8 1.34-8 4v2h16v-2c0-2.66-5.33-4-8-4" fill="#fff"/></svg>
<div class="abs" style="left:84.5px;top:517.8px;width:65.5px;overflow:hidden;font-size:12.8px;line-height:15px;color:#2b2b2b;white-space:nowrap">Đỗ Văn Khánh</div>
<div class="abs" style="left:84.5px;top:536.8px;width:65.5px;overflow:hidden;font-size:12.8px;line-height:15px;color:#6b7280;white-space:nowrap">@khanhdv1</div>
<svg class="abs" style="left:158px;top:530px" width="11" height="9" viewBox="0 0 11 9"><rect x="0.6" y="0.6" width="9.8" height="7.8" rx="1" fill="none" stroke="#8b95a5" stroke-width="1"/><path d="M0.8 1.2 L5.5 4.8 L10.2 1.2" fill="none" stroke="#8b95a5" stroke-width="1"/></svg>
<div class="abs" style="left:176.5px;top:526.5px;width:87.5px;overflow:hidden;font-size:11px;line-height:14px;color:#4b5563;white-space:nowrap">khanhdv1@phanmem.vn</div>
<div class="abs badge" style="left:271.3px;top:521.5px;width:78.5px;height:24px;background:#eef4ff;border:1px solid #dfe9fb;color:#2563eb"><svg class="abs" style="left:7.5px;top:6.5px" width="11" height="11" viewBox="0 0 24 24"><path d="M12 2 L4 5 V11 C4 16 7.5 20.5 12 22 C16.5 20.5 20 16 20 11 V5 Z" fill="none" stroke="#2563eb" stroke-width="2.4" stroke-linejoin="round"/></svg><div class="abs" style="left:23px;top:5.5px;font-size:11.2px;line-height:13px;font-weight:700">Manager</div></div>
<div class="abs badge" style="left:391px;top:522.5px;width:91.5px;height:24px;background:#f5f8ff;border:1px solid #e2e9f6;color:#4a66d6"><svg class="abs" style="left:6.5px;top:6px" width="12" height="11" viewBox="0 0 24 24"><path d="M16.67 13.13C18.04 14.06 19 15.32 19 17v3h4v-3c0-2.18-3.57-3.47-6.33-3.87M15 12c2.21 0 4-1.79 4-4s-1.79-4-4-4c-.47 0-.91.1-1.33.24C14.5 5.27 15 6.58 15 8s-.5 2.73-1.33 3.76c.42.14.86.24 1.33.24m-6 0c2.21 0 4-1.79 4-4s-1.79-4-4-4-4 1.79-4 4 1.79 4 4 4m0-6c1.1 0 2 .9 2 2s-.9 2-2 2-2-.9-2-2 .9-2 2-2m0 7c-2.67 0-8 1.34-8 4v3h16v-3c0-2.66-5.33-4-8-4m6 5H3v-.99C3.2 16.29 6.3 15 9 15s5.8 1.29 6 2z" fill="#4a66d6"/></svg><div class="abs" style="left:21.5px;top:4.5px;font-size:11.7px;line-height:14px">2 nhân viên</div></div>
<div class="abs badge" style="left:564px;top:522.5px;width:70.5px;height:23px;background:#efeefe;color:#5b52d6"><div class="abs" style="left:6.5px;top:4.5px;font-size:11.7px;line-height:14px">2 tài khoản</div></div>
<div class="abs" style="left:727px;top:521px;width:85.5px;height:25px;border-radius:13px;background:#ebfaef;border:1px solid #e0f5e6;color:#2f9e55"><svg class="abs" style="left:7.5px;top:6.5px" width="11" height="11" viewBox="0 0 12 12"><circle cx="6" cy="6" r="5" fill="none" stroke="#2f9e55" stroke-width="1.2"/><path d="M3.6 6.1 L5.3 7.7 L8.4 4.6" fill="none" stroke="#2f9e55" stroke-width="1.2"/></svg><div class="abs" style="left:22.5px;top:5px;font-size:11.7px;line-height:14px">Hoạt động</div></div>
<div class="abs" style="left:867px;top:526.5px;font-size:13px;line-height:15px;color:#5c6370;white-space:nowrap">11:39:27 14/04/2026</div>
<div class="abs" style="left:1036px;top:527px;font-size:13px;line-height:15px;color:#6b7487;white-space:nowrap">10/03/2026</div>
<svg class="abs" style="left:1216.1px;top:528px" width="4" height="13" viewBox="0 0 4 13"><circle cx="2" cy="2" r="1.3" fill="#d0d0d0"/><circle cx="2" cy="6" r="1.3" fill="#d0d0d0"/><circle cx="2" cy="10" r="1.3" fill="#d0d0d0"/></svg>
<div class="abs" style="left:47px;top:563px;width:27px;height:27px;border-radius:50%;background:#bdbdbd"></div>
<svg class="abs" style="left:51.5px;top:567.5px" width="18" height="18" viewBox="0 0 24 24"><path d="M12 12c2.21 0 4-1.79 4-4s-1.79-4-4-4-4 1.79-4 4 1.79 4 4 4m0 2c-2.67 0-8 1.34-8 4v2h16v-2c0-2.66-5.33-4-8-4" fill="#fff"/></svg>
<div class="abs" style="left:84.5px;top:558.8px;width:65.5px;overflow:hidden;font-size:12.8px;line-height:15px;color:#2b2b2b;white-space:nowrap">Hoàng Tiến</div>
<div class="abs" style="left:84.5px;top:577.8px;width:65.5px;overflow:hidden;font-size:12.8px;line-height:15px;color:#6b7280;white-space:nowrap">@tienht</div>
<svg class="abs" style="left:158px;top:571px" width="11" height="9" viewBox="0 0 11 9"><rect x="0.6" y="0.6" width="9.8" height="7.8" rx="1" fill="none" stroke="#8b95a5" stroke-width="1"/><path d="M0.8 1.2 L5.5 4.8 L10.2 1.2" fill="none" stroke="#8b95a5" stroke-width="1"/></svg>
<div class="abs" style="left:176.5px;top:567.5px;width:87.5px;overflow:hidden;font-size:11px;line-height:14px;color:#4b5563;white-space:nowrap">tienht@phanmem.vn</div>
<div class="abs badge" style="left:271.3px;top:562.5px;width:85px;height:24.5px;background:#ebfbf0;border:1px solid #dff5e6;color:#1e9e50"><svg class="abs" style="left:7px;top:6px;color:#1e9e50" width="10.5" height="10.5" viewBox="0 0 12 12"><circle cx="6" cy="3.8" r="2.3" fill="none" stroke="currentColor" stroke-width="1.2"/><path d="M1.5 10.5 Q1.5 7.3 6 7.3 Q10.5 7.3 10.5 10.5 Z" fill="none" stroke="currentColor" stroke-width="1.2" stroke-linejoin="round"/></svg><div class="abs" style="left:23px;top:5.5px;font-size:11.2px;line-height:13px;font-weight:700">Nhân viên</div></div>
<div class="abs badge" style="left:391px;top:563.5px;width:77.5px;height:23px;background:#e9f9fd;color:#2b7ea6"><div class="abs" style="left:7px;top:4.5px;font-size:11.7px;line-height:14px">Trần Phú An</div></div>
<div class="abs badge" style="left:564px;top:563.5px;width:70.5px;height:23px;background:#f5f7fa;color:#6b7587"><div class="abs" style="left:6.5px;top:4.5px;font-size:11.7px;line-height:14px">0 tài khoản</div></div>
<div class="abs" style="left:727px;top:562px;width:85.5px;height:25px;border-radius:13px;background:#ebfaef;border:1px solid #e0f5e6;color:#2f9e55"><svg class="abs" style="left:7.5px;top:6.5px" width="11" height="11" viewBox="0 0 12 12"><circle cx="6" cy="6" r="5" fill="none" stroke="#2f9e55" stroke-width="1.2"/><path d="M3.6 6.1 L5.3 7.7 L8.4 4.6" fill="none" stroke="#2f9e55" stroke-width="1.2"/></svg><div class="abs" style="left:22.5px;top:5px;font-size:11.7px;line-height:14px">Hoạt động</div></div>
<div class="abs" style="left:867px;top:567.5px;font-size:13px;line-height:15px;color:#5c6370;white-space:nowrap">10:15:12 10/03/2026</div>
<div class="abs" style="left:1036px;top:568px;font-size:13px;line-height:15px;color:#6b7487;white-space:nowrap">10/03/2026</div>
<svg class="abs" style="left:1216.1px;top:569px" width="4" height="13" viewBox="0 0 4 13"><circle cx="2" cy="2" r="1.3" fill="#d0d0d0"/><circle cx="2" cy="6" r="1.3" fill="#d0d0d0"/><circle cx="2" cy="10" r="1.3" fill="#d0d0d0"/></svg>
<div class="abs" style="left:47px;top:604px;width:27px;height:27px;border-radius:50%;background:#bdbdbd"></div>
<svg class="abs" style="left:51.5px;top:608.5px" width="18" height="18" viewBox="0 0 24 24"><path d="M12 12c2.21 0 4-1.79 4-4s-1.79-4-4-4-4 1.79-4 4 1.79 4 4 4m0 2c-2.67 0-8 1.34-8 4v2h16v-2c0-2.66-5.33-4-8-4" fill="#fff"/></svg>
<div class="abs" style="left:84.5px;top:599.8px;width:65.5px;overflow:hidden;font-size:12.8px;line-height:15px;color:#2b2b2b;white-space:nowrap">Thu Hà</div>
<div class="abs" style="left:84.5px;top:618.8px;width:65.5px;overflow:hidden;font-size:12.8px;line-height:15px;color:#6b7280;white-space:nowrap">@hoangthuha</div>
<svg class="abs" style="left:158px;top:612px" width="11" height="9" viewBox="0 0 11 9"><rect x="0.6" y="0.6" width="9.8" height="7.8" rx="1" fill="none" stroke="#8b95a5" stroke-width="1"/><path d="M0.8 1.2 L5.5 4.8 L10.2 1.2" fill="none" stroke="#8b95a5" stroke-width="1"/></svg>
<div class="abs" style="left:176.5px;top:608.5px;width:87.5px;overflow:hidden;font-size:11px;line-height:14px;color:#4b5563;white-space:nowrap">hoangtthuha1907@gmail.com</div>
<div class="abs badge" style="left:271.3px;top:603.5px;width:85px;height:24.5px;background:#ebfbf0;border:1px solid #dff5e6;color:#1e9e50"><svg class="abs" style="left:7px;top:6px;color:#1e9e50" width="10.5" height="10.5" viewBox="0 0 12 12"><circle cx="6" cy="3.8" r="2.3" fill="none" stroke="currentColor" stroke-width="1.2"/><path d="M1.5 10.5 Q1.5 7.3 6 7.3 Q10.5 7.3 10.5 10.5 Z" fill="none" stroke="currentColor" stroke-width="1.2" stroke-linejoin="round"/></svg><div class="abs" style="left:23px;top:5.5px;font-size:11.2px;line-height:13px;font-weight:700">Nhân viên</div></div>
<div class="abs badge" style="left:391px;top:604.5px;width:77.5px;height:23px;background:#e9f9fd;color:#2b7ea6"><div class="abs" style="left:7px;top:4.5px;font-size:11.7px;line-height:14px">Trần Phú An</div></div>
<div class="abs badge" style="left:564px;top:604.5px;width:70.5px;height:23px;background:#f5f7fa;color:#6b7587"><div class="abs" style="left:6.5px;top:4.5px;font-size:11.7px;line-height:14px">0 tài khoản</div></div>
<div class="abs" style="left:727px;top:603px;width:85.5px;height:25px;border-radius:13px;background:#ebfaef;border:1px solid #e0f5e6;color:#2f9e55"><svg class="abs" style="left:7.5px;top:6.5px" width="11" height="11" viewBox="0 0 12 12"><circle cx="6" cy="6" r="5" fill="none" stroke="#2f9e55" stroke-width="1.2"/><path d="M3.6 6.1 L5.3 7.7 L8.4 4.6" fill="none" stroke="#2f9e55" stroke-width="1.2"/></svg><div class="abs" style="left:22.5px;top:5px;font-size:11.7px;line-height:14px">Hoạt động</div></div>
<div class="abs" style="left:867px;top:608.5px;font-size:13px;line-height:15px;color:#5c6370;white-space:nowrap">—</div>
<div class="abs" style="left:1036px;top:609px;font-size:13px;line-height:15px;color:#6b7487;white-space:nowrap">10/03/2026</div>
<svg class="abs" style="left:1216.1px;top:610px" width="4" height="13" viewBox="0 0 4 13"><circle cx="2" cy="2" r="1.3" fill="#d0d0d0"/><circle cx="2" cy="6" r="1.3" fill="#d0d0d0"/><circle cx="2" cy="10" r="1.3" fill="#d0d0d0"/></svg>
<div class="abs" style="left:47px;top:645px;width:27px;height:27px;border-radius:50%;background:#bdbdbd"></div>
<svg class="abs" style="left:51.5px;top:649.5px" width="18" height="18" viewBox="0 0 24 24"><path d="M12 12c2.21 0 4-1.79 4-4s-1.79-4-4-4-4 1.79-4 4 1.79 4 4 4m0 2c-2.67 0-8 1.34-8 4v2h16v-2c0-2.66-5.33-4-8-4" fill="#fff"/></svg>
<div class="abs" style="left:84.5px;top:640.8px;width:65.5px;overflow:hidden;font-size:12.8px;line-height:15px;color:#2b2b2b;white-space:nowrap">Quân Bảo</div>
<div class="abs" style="left:84.5px;top:659.8px;width:65.5px;overflow:hidden;font-size:12.8px;line-height:15px;color:#6b7280;white-space:nowrap">@baottq</div>
<svg class="abs" style="left:158px;top:653px" width="11" height="9" viewBox="0 0 11 9"><rect x="0.6" y="0.6" width="9.8" height="7.8" rx="1" fill="none" stroke="#8b95a5" stroke-width="1"/><path d="M0.8 1.2 L5.5 4.8 L10.2 1.2" fill="none" stroke="#8b95a5" stroke-width="1"/></svg>
<div class="abs" style="left:176.5px;top:649.5px;width:87.5px;overflow:hidden;font-size:11px;line-height:14px;color:#4b5563;white-space:nowrap">baottq@phanmem.vn</div>
<div class="abs badge" style="left:271.3px;top:644.5px;width:85px;height:24.5px;background:#ebfbf0;border:1px solid #dff5e6;color:#1e9e50"><svg class="abs" style="left:7px;top:6px;color:#1e9e50" width="10.5" height="10.5" viewBox="0 0 12 12"><circle cx="6" cy="3.8" r="2.3" fill="none" stroke="currentColor" stroke-width="1.2"/><path d="M1.5 10.5 Q1.5 7.3 6 7.3 Q10.5 7.3 10.5 10.5 Z" fill="none" stroke="currentColor" stroke-width="1.2" stroke-linejoin="round"/></svg><div class="abs" style="left:23px;top:5.5px;font-size:11.2px;line-height:13px;font-weight:700">Nhân viên</div></div>
<div class="abs badge" style="left:391px;top:645.5px;width:77.5px;height:23px;background:#e9f9fd;color:#2b7ea6"><div class="abs" style="left:7px;top:4.5px;font-size:11.7px;line-height:14px">Trần Phú An</div></div>
<div class="abs badge" style="left:564px;top:645.5px;width:70.5px;height:23px;background:#f5f7fa;color:#6b7587"><div class="abs" style="left:6.5px;top:4.5px;font-size:11.7px;line-height:14px">0 tài khoản</div></div>
<div class="abs" style="left:727px;top:644px;width:85.5px;height:25px;border-radius:13px;background:#ebfaef;border:1px solid #e0f5e6;color:#2f9e55"><svg class="abs" style="left:7.5px;top:6.5px" width="11" height="11" viewBox="0 0 12 12"><circle cx="6" cy="6" r="5" fill="none" stroke="#2f9e55" stroke-width="1.2"/><path d="M3.6 6.1 L5.3 7.7 L8.4 4.6" fill="none" stroke="#2f9e55" stroke-width="1.2"/></svg><div class="abs" style="left:22.5px;top:5px;font-size:11.7px;line-height:14px">Hoạt động</div></div>
<div class="abs" style="left:867px;top:649.5px;font-size:13px;line-height:15px;color:#5c6370;white-space:nowrap">14:54:09 12/03/2026</div>
<div class="abs" style="left:1036px;top:650px;font-size:13px;line-height:15px;color:#6b7487;white-space:nowrap">10/03/2026</div>
<svg class="abs" style="left:1216.1px;top:651px" width="4" height="13" viewBox="0 0 4 13"><circle cx="2" cy="2" r="1.3" fill="#d0d0d0"/><circle cx="2" cy="6" r="1.3" fill="#d0d0d0"/><circle cx="2" cy="10" r="1.3" fill="#d0d0d0"/></svg>
</div>
<svg class="abs" style="left:228.5px;top:76px" width="21" height="21" viewBox="0 0 24 24"><path d="M16 11c1.66 0 2.99-1.34 2.99-3S17.66 5 16 5c-1.66 0-3 1.34-3 3s1.34 3 3 3m-8 0c1.66 0 2.99-1.34 2.99-3S9.66 5 8 5C6.34 5 5 6.34 5 8s1.34 3 3 3m0 2c-2.33 0-7 1.170-7 3.5V19h14v-2.5c0-2.33-4.67-3.5-7-3.5m8 0c-.29 0-.62.02-.97.05 1.16.84 1.97 1.970 1.97 3.45V19h6v-2.5c0-2.33-4.67-3.5-7-3.5" fill="#1f1f1f"/></svg>
<div class="abs" style="left:255px;top:75px;font-size:18.8px;line-height:22px;font-weight:700;color:#1c1c1c;white-space:nowrap">Quản lý User</div>
<div class="abs" style="left:229px;top:100px;font-size:12.9px;line-height:15px;color:#737373;white-space:nowrap">Quản lý người dùng và phân quyền hệ thống</div>
<div class="abs" style="left:1223px;top:81px;width:116px;height:29px;border:1px solid #a4c5ea;border-radius:4px;background:transparent"></div>
<svg class="abs" style="left:1233px;top:87px" width="14" height="17" viewBox="0 0 24 24"><path d="M19 9h-4V3H9v6H5l7 7zM5 18v2h14v-2z" fill="#1976d2"/></svg>
<div class="abs" style="left:1255px;top:89.5px;font-size:11px;line-height:13px;color:#2a7bd0;letter-spacing:0.35px;white-space:nowrap">XUẤT EXCEL</div>
<div class="abs" style="left:1352px;top:81px;width:130px;height:29px;border-radius:4px;background:#1976d2;box-shadow:0 3px 1px -2px rgba(0,0,0,.2),0 2px 2px 0 rgba(0,0,0,.14),0 1px 5px 0 rgba(0,0,0,.12)"></div>
<svg class="abs" style="left:1362px;top:88px" width="15" height="15" viewBox="0 0 24 24"><path d="M19 13h-6v6h-2v-6H5v-2h6V5h2v6h6z" fill="#fff"/></svg>
<div class="abs" style="left:1384px;top:89.5px;font-size:11.2px;line-height:13px;color:#fff;letter-spacing:0.35px;white-space:nowrap">THÊM USER MỚI</div>
<div class="abs card" style="left:229.8px;top:150px;width:193.5px;height:83px"><svg class="abs" style="left:12.5px;top:22px" width="32" height="32" viewBox="0 0 24 24"><path d="M16 11c1.66 0 2.99-1.34 2.99-3S17.66 5 16 5c-1.66 0-3 1.34-3 3s1.34 3 3 3m-8 0c1.66 0 2.99-1.34 2.99-3S9.66 5 8 5C6.34 5 5 6.34 5 8s1.34 3 3 3m0 2c-2.33 0-7 1.170-7 3.5V19h14v-2.5c0-2.33-4.67-3.5-7-3.5m8 0c-.29 0-.62.02-.97.05 1.16.84 1.97 1.970 1.97 3.45V19h6v-2.5c0-2.33-4.67-3.5-7-3.5" fill="#1976d2"/></svg><div class="abs" style="left:57.5px;top:13px;font-size:12.8px;line-height:15px;color:#6f6f6f;white-space:nowrap">Tổng users</div><div class="abs" style="left:57.5px;top:31.5px;font-size:27.3px;line-height:32px;font-weight:700;color:#161616">17</div></div>
<div class="abs card" style="left:443.1px;top:150px;width:193.5px;height:83px"><svg class="abs" style="left:12.5px;top:22px" width="32" height="32" viewBox="0 0 24 24"><path d="M12 2C6.48 2 2 6.48 2 12s4.48 10 10 10 10-4.48 10-10S17.52 2 12 2m-2 15-5-5 1.41-1.41L10 14.17l7.59-7.59L19 8z" fill="#4caf50"/></svg><div class="abs" style="left:57.5px;top:13px;font-size:12.8px;line-height:15px;color:#6f6f6f;white-space:nowrap">Đang hoạt động</div><div class="abs" style="left:57.5px;top:31.5px;font-size:27.3px;line-height:32px;font-weight:700;color:#161616">17</div></div>
<div class="abs card" style="left:656.4px;top:150px;width:193.5px;height:83px"><svg class="abs" style="left:12.5px;top:22px" width="32" height="32" viewBox="0 0 24 24"><path d="M7 11v2h10v-2zm5-9C6.48 2 2 6.48 2 12s4.48 10 10 10 10-4.48 10-10S17.52 2 12 2m0 18c-4.41 0-8-3.59-8-8s3.59-8 8-8 8 3.59 8 8-3.59 8-8 8" fill="#e53935"/></svg><div class="abs" style="left:57.5px;top:13px;font-size:12.8px;line-height:15px;color:#6f6f6f;white-space:nowrap">Vô hiệu</div><div class="abs" style="left:57.5px;top:31.5px;font-size:27.3px;line-height:32px;font-weight:700;color:#161616">0</div></div>
<div class="abs card" style="left:869.7px;top:150px;width:193.5px;height:83px"><svg class="abs" style="left:12.5px;top:22px" width="32" height="32" viewBox="0 0 24 24"><path d="M17 11c.34 0 .67.04 1 .09V6.27L10.5 3 3 6.27v4.910c0 4.54 3.2 8.79 7.5 9.82.55-.13 1.08-.32 1.6-.55-.69-.98-1.1-2.17-1.1-3.45 0-3.31 2.69-6 6-6m0 2c-2.21 0-4 1.79-4 4s1.79 4 4 4 4-1.79 4-4-1.79-4-4-4m0 1.38c.62 0 1.12.51 1.12 1.12s-.51 1.12-1.12 1.12-1.12-.51-1.12-1.12.5-1.12 1.12-1.12m0 5.37c-.93 0-1.74-.46-2.24-1.17.05-.72 1.51-1.08 2.24-1.08s2.19.36 2.24 1.08c-.5.71-1.31 1.170-2.24 1.17" fill="#9c27b0"/></svg><div class="abs" style="left:57.5px;top:13px;font-size:12.8px;line-height:15px;color:#6f6f6f;white-space:nowrap">Admin</div><div class="abs" style="left:57.5px;top:31.5px;font-size:27.3px;line-height:32px;font-weight:700;color:#161616">1</div></div>
<div class="abs card" style="left:1083.0px;top:150px;width:193.5px;height:83px"><svg class="abs" style="left:12.5px;top:22px" width="32" height="32" viewBox="0 0 24 24"><path d="M16 11c1.66 0 2.99-1.34 2.99-3S17.66 5 16 5c-1.66 0-3 1.34-3 3s1.34 3 3 3m-8 0c1.66 0 2.99-1.34 2.99-3S9.66 5 8 5C6.34 5 5 6.34 5 8s1.34 3 3 3m0 2c-2.33 0-7 1.170-7 3.5V19h14v-2.5c0-2.33-4.67-3.5-7-3.5m8 0c-.29 0-.62.02-.97.05 1.16.84 1.97 1.970 1.97 3.45V19h6v-2.5c0-2.33-4.67-3.5-7-3.5" fill="#ff9800"/></svg><div class="abs" style="left:57.5px;top:13px;font-size:12.8px;line-height:15px;color:#6f6f6f;white-space:nowrap">Manager</div><div class="abs" style="left:57.5px;top:31.5px;font-size:27.3px;line-height:32px;font-weight:700;color:#161616">7</div></div>
<div class="abs card" style="left:1296.3px;top:150px;width:193.5px;height:83px"><svg class="abs" style="left:12.5px;top:22px" width="32" height="32" viewBox="0 0 24 24"><path d="M12 2C6.48 2 2 6.48 2 12s4.48 10 10 10 10-4.48 10-10S17.52 2 12 2m-2 15-5-5 1.41-1.41L10 14.17l7.59-7.59L19 8z" fill="#4caf50"/></svg><div class="abs" style="left:57.5px;top:13px;font-size:12.8px;line-height:15px;color:#6f6f6f;white-space:nowrap">Nhân viên</div><div class="abs" style="left:57.5px;top:31.5px;font-size:27.3px;line-height:32px;font-weight:700;color:#161616">9</div></div>
<div id="footer">
 <svg class="abs" style="left:55px;top:0px" width="85" height="68" viewBox="0 0 85 68">
  <path d="M11 35.6 H72 Q77.5 35.6 75 30.5 L63 9.5 Q60 4.5 55.5 4.6 Q51.5 4.8 49 8.5 L41.5 18.8 L34 8.5 Q31.5 4.8 27.5 4.6 Q23 4.5 20 9.5 L8 30.5 Q5.5 35.6 11 35.6 Z" fill="#fff"/>
  <path d="M20 10 L32.3 28" stroke="#2a3886" stroke-width="1.3" fill="none"/>
  <path d="M62.9 10.5 L50.9 27.7" stroke="#2a3886" stroke-width="1.3" fill="none"/>
  <path d="M26.5 35.8 A16.7 16.7 0 0 1 56.3 35.8" stroke="#2a3886" stroke-width="1.3" fill="none"/>
  <text x="12.2" y="56.2" font-family="Liberation Sans" font-weight="700" font-size="24" fill="#fff" textLength="60" lengthAdjust="spacingAndGlyphs" stroke="#fff" stroke-width="1.4">MKT</text>
  <text x="12" y="61.8" font-family="Liberation Sans" font-weight="700" font-size="4.4" fill="#fff" textLength="60" lengthAdjust="spacingAndGlyphs">Phần mềm Marketing đa kênh</text>
 </svg>
 <svg class="abs" style="left:150px;top:10px" width="345" height="50" viewBox="0 0 345 50">
  <text x="3" y="31.8" font-family="Liberation Sans" font-size="25.5" fill="#fff" stroke="#29368a" stroke-width="0.35" textLength="332" lengthAdjust="spacingAndGlyphs">Hiệu quả - Nhanh - Dễ dùng</text>
 </svg>
 <svg class="abs" style="left:1178px;top:17px" width="36" height="36" viewBox="0 0 36 36">
  <circle cx="17.6" cy="17" r="15.3" fill="#fff"/>
  <g fill="none" stroke="#2c78bd" stroke-width="1.1">
   <ellipse cx="17.6" cy="17" rx="6.5" ry="15.3"/>
   <path d="M17.6 1.7 V32.3 M2.3 17 H32.9 M4.5 9.5 Q17.6 12.5 30.7 9.5 M4.5 24.5 Q17.6 21.5 30.7 24.5"/>
  </g>
 </svg>
 <svg class="abs" style="left:1220px;top:10px" width="190" height="50" viewBox="0 0 190 50">
  <text x="4" y="31.3" font-family="Liberation Sans" font-size="27" fill="#fff" stroke="#2d7bbf" stroke-width="0.35" textLength="175.6" lengthAdjust="spacingAndGlyphs">phanmemmkt.vn</text>
 </svg>
</div>
<div class="abs" style="left:455.5px;top:734px;width:1px;height:20px;background:#d5d5d5"></div>
<div class="abs" style="left:492px;top:734px;width:1px;height:20px;background:#d5d5d5"></div>
</div>
</body></html>
